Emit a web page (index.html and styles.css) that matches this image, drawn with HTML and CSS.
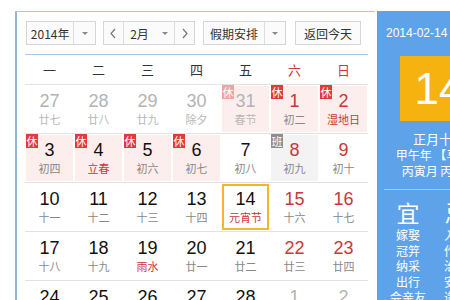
FILE: index.html
```html
<!DOCTYPE html>
<html>
    <head>
        <title>万年历</title>
        <link rel="stylesheet" href="styles.css">
    </head>

    <body>
        <div id="widget">
            <div id="calendar">
                <div class="toolbar">
                    <div class="box year"><span class="label">2014年</span><span class="drop"><i class="tri"></i></span></div>
                    <div class="box month">
                        <span class="nav"><svg width="8" height="11" viewBox="0 0 8 11"><path d="M6 1 L2 5.5 L6 10" fill="none" stroke="#777" stroke-width="1.2"/></svg></span>
                        <span class="label">2月<i class="tri"></i></span>
                        <span class="nav next"><svg width="8" height="11" viewBox="0 0 8 11"><path d="M2 1 L6 5.5 L2 10" fill="none" stroke="#777" stroke-width="1.2"/></svg></span>
                    </div>
                    <div class="box holiday"><span class="label">假期安排</span><span class="drop"><i class="tri"></i></span></div>
                    <div class="box today-btn">返回今天</div>
                </div>

                <div class="weekdays">
                    <span>一</span><span>二</span><span>三</span><span>四</span><span>五</span><span class="red">六</span><span class="red">日</span>
                </div>

                <div class="row">
                    <div class="cell other"><b>27</b><small>廿七</small></div>
                    <div class="cell other"><b>28</b><small>廿八</small></div>
                    <div class="cell other"><b>29</b><small>廿九</small></div>
                    <div class="cell other"><b>30</b><small>除夕</small></div>
                    <div class="cell other rest"><em class="tag faded">休</em><b>31</b><small>春节</small></div>
                    <div class="cell rest wkend"><em class="tag">休</em><b>1</b><small>初二</small></div>
                    <div class="cell rest wkend fest"><em class="tag">休</em><b>2</b><small>湿地日</small></div>
                </div>
                <div class="row">
                    <div class="cell rest"><em class="tag">休</em><b>3</b><small>初四</small></div>
                    <div class="cell rest fest"><em class="tag">休</em><b>4</b><small>立春</small></div>
                    <div class="cell rest"><em class="tag">休</em><b>5</b><small>初六</small></div>
                    <div class="cell rest"><em class="tag">休</em><b>6</b><small>初七</small></div>
                    <div class="cell"><b>7</b><small>初八</small></div>
                    <div class="cell work wkend"><em class="tag ban">班</em><b>8</b><small>初九</small></div>
                    <div class="cell wkend"><b>9</b><small>初十</small></div>
                </div>
                <div class="row">
                    <div class="cell"><b>10</b><small>十一</small></div>
                    <div class="cell"><b>11</b><small>十二</small></div>
                    <div class="cell"><b>12</b><small>十三</small></div>
                    <div class="cell"><b>13</b><small>十四</small></div>
                    <div class="cell today fest"><b>14</b><small>元宵节</small></div>
                    <div class="cell wkend"><b>15</b><small>十六</small></div>
                    <div class="cell wkend"><b>16</b><small>十七</small></div>
                </div>
                <div class="row">
                    <div class="cell"><b>17</b><small>十八</small></div>
                    <div class="cell"><b>18</b><small>十九</small></div>
                    <div class="cell fest"><b>19</b><small>雨水</small></div>
                    <div class="cell"><b>20</b><small>廿一</small></div>
                    <div class="cell"><b>21</b><small>廿二</small></div>
                    <div class="cell wkend"><b>22</b><small>廿三</small></div>
                    <div class="cell wkend"><b>23</b><small>廿四</small></div>
                </div>
                <div class="row">
                    <div class="cell"><b>24</b><small>廿五</small></div>
                    <div class="cell"><b>25</b><small>廿六</small></div>
                    <div class="cell"><b>26</b><small>廿七</small></div>
                    <div class="cell"><b>27</b><small>廿八</small></div>
                    <div class="cell"><b>28</b><small>廿九</small></div>
                    <div class="cell other"><b>1</b><small>三十</small></div>
                    <div class="cell other"><b>2</b><small>初一</small></div>
                </div>
            </div>

            <div id="panel">
                <p class="date">2014-02-14 星期五</p>
                <div class="bigday">14</div>
                <p class="lunar">正月十五</p>
                <p class="ganzhi">甲午年 【马年】</p>
                <p class="ganzhi">丙寅月 丙午日</p>
                <div class="yiji">
                    <div class="col">
                        <h3>宜</h3>
                        <p>嫁娶</p><p>冠笄</p><p>纳采</p><p>出行</p><p>会亲友</p>
                    </div>
                    <div class="col">
                        <h3>忌</h3>
                        <p>入宅</p><p>作灶</p><p>治病</p><p>安葬</p><p>造桥</p>
                    </div>
                </div>
            </div>
        </div>
    </body>
</html>
```

FILE: styles.css
```css
html,body{margin: 0;padding: 0;background: #fff;overflow: hidden;}
body{padding: 11px 0 0 15px;font-family: "Noto Sans CJK SC", sans-serif;font-size: 12px;color: #333;}
#widget{display: flex;width: 520px;}

#calendar{width: 343px;padding: 9px 7px 0 8px;border-top: 1px solid #a5c9ea;border-left: 2px solid #8fb6d6;flex: none;}
.toolbar{display: flex;height: 24px;padding-left: 1px;border-bottom: 1px solid #a9c8e4;padding-bottom: 9px;}
.box{display: flex;align-items: center;height: 22px;border: 1px solid #d6d6d6;background: #fbfbfb;margin-right: 7px;font-size: 12px;color: #333;}
.box .label{display: flex;align-items: center;justify-content: center;height: 100%;}
.box .drop{display: flex;align-items: center;justify-content: center;width: 21px;height: 100%;border-left: 1px solid #ddd;}
.tri{display: inline-block;width: 0;height: 0;border-left: 3px solid transparent;border-right: 3px solid transparent;border-top: 3px solid #888;}
.year{width: 68px;}
.year .label{width: 47px;}
.month{width: 90px;margin-right: 8px;}
.month .nav{display: flex;align-items: center;justify-content: center;width: 19px;height: 100%;border-right: 1px solid #ddd;}
.month .nav.next{border-right: none;border-left: 1px solid #ddd;}
.month .label{width: 51px;}
.month .label .tri{margin-left: 13px;}
.holiday{width: 81px;margin-right: 9px;}
.holiday .label{width: 62px;}
.today-btn{width: 68px;justify-content: center;}

.weekdays{display: grid;grid-template-columns: repeat(7, 49px);height: 29px;align-items: center;text-align: center;font-size: 13px;color: #333;}
.weekdays .red{color: #c8373a;}

.row{display: grid;grid-template-columns: repeat(7, 49px);border-top: 1px solid #e2e2e2;}
.cell{position: relative;height: 46px;margin: 1px;box-sizing: border-box;padding-top: 5px;text-align: center;}
.cell b{display: block;font-family: "Liberation Sans", Arial, sans-serif;font-weight: normal;font-size: 18px;line-height: 21px;color: #111;}
.cell small{display: block;font-size: 11px;line-height: 15px;color: #888;}
.cell.wkend b{color: #c8373a;}
.cell.fest small{color: #c8373a;}
.cell.other b{color: #b3b3b3;}
.cell.other small{color: #b8b8b8;}
.cell.rest{background: #fdeeee;}
.cell.work{background: #f3f3f3;}
.cell.today{border: 2px solid #f3b72e;padding-top: 3px;}
.tag{position: absolute;left: 0;top: -1px;width: 12px;height: 14px;line-height: 14px;font-style: normal;font-size: 11px;color: #fff;background: #e2393a;text-align: center;}
.tag.faded{background: #f0a3a3;}
.tag.ban{background: #8e8e8e;}

#panel{width: 124px;margin-left: 2px;background: #5ea3ea;color: #fff;flex: none;height: 289px;overflow: hidden;}
#panel p{margin: 0;white-space: nowrap;}
.date{padding: 15px 0 0 9px;line-height: 14px;font-size: 12px;font-family: "Liberation Sans", "Noto Sans CJK SC", sans-serif;}
.bigday{width: 78px;height: 65px;margin: 16px 0 0 23px;background: #f6b20f;font-family: "Liberation Sans", Arial, sans-serif;font-size: 44px;line-height: 65px;text-align: center;}
.lunar{margin-top: 10px !important;text-align: center;line-height: 16px;font-size: 13px;}
.ganzhi{text-align: center;line-height: 16px;font-size: 12px;}
.yiji{display: flex;margin: 10px 0 0 7px;padding-top: 10px;border-top: 1px solid rgba(255,255,255,0.45);}
.yiji .col{width: 48px;text-align: center;}
.yiji h3{margin: 0 0 3px 0;font-size: 23px;line-height: 24px;font-weight: normal;}
.yiji .col p{font-size: 12px;line-height: 15.6px;}
```
